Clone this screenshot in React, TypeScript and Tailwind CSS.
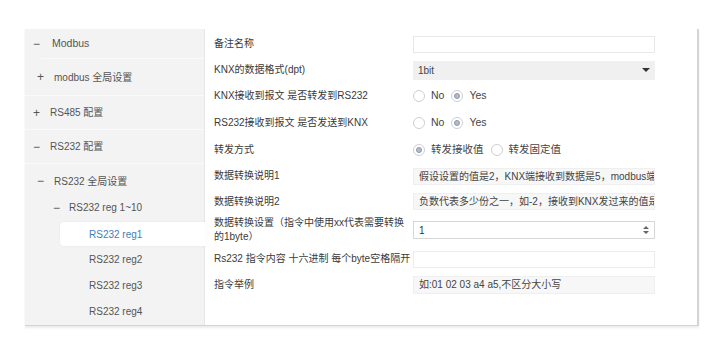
import React from 'react';

const font = { fontFamily: '"Liberation Sans", "Noto Sans CJK SC", sans-serif' };

const Radio: React.FC<{ on?: boolean; label: string }> = ({ on, label }) => (
  <div className="flex items-center gap-[6px] mr-[7px]">
    <span className="w-[12px] h-[12px] rounded-full border border-[#cfcfcf] bg-white flex items-center justify-center">
      {on && <span className="w-[6px] h-[6px] rounded-full bg-[#b4bacb] border border-[#8d97ad]" />}
    </span>
    <span className="text-[#444] text-[10.5px]">{label}</span>
  </div>
);

const Row: React.FC<{ h: string; label: React.ReactNode; children?: React.ReactNode }> = ({ h, label, children }) => (
  <div className={`flex items-center ${h}`}>
    <div className="w-[199px] shrink-0 leading-[14px] text-[#3a3a3a] whitespace-nowrap">{label}</div>
    <div className="w-[242px] flex items-center">{children}</div>
  </div>
);

const SideRow: React.FC<{ h: string; pl: string; sign?: string; text: string }> = ({ h, pl, sign, text }) => (
  <div className={`flex items-center ${h} ${pl}`}>
    {sign && <span className="w-[17px] text-[#555] text-[12px]">{sign}</span>}
    <span className="text-[#555]">{text}</span>
  </div>
);

export default function App() {
  return (
    <div className="w-[712px] h-[345px] bg-white text-[10px] pt-[29px] pl-[25px]" style={font}>
      <div className="flex w-[674px] h-[297px] border-r-2 border-b border-[#d4d4d4] shadow-[0_2px_2px_rgba(0,0,0,0.08)]">
        {/* Sidebar */}
        <div className="w-[180px] bg-[#f3f3f3] border-r border-[#e6e6e6] flex flex-col relative">
          <div className="h-[29px] flex items-center pl-[8px]">
            <span className="w-[19px] text-[#555] text-[12px]">−</span>
            <span className="text-[#555] text-[10.5px]">Modbus</span>
          </div>
          <div className="ml-[16px] border-t border-[#fafafa]" />
          <SideRow h="h-[36px]" pl="pl-[12px]" sign="+" text="modbus 全局设置" />
          <div className="border-t border-[#fafafa]" />
          <SideRow h="h-[33px]" pl="pl-[8px]" sign="+" text="RS485 配置" />
          <div className="border-t border-[#fafafa]" />
          <SideRow h="h-[33px]" pl="pl-[8px]" sign="−" text="RS232 配置" />
          <div className="border-t border-[#fafafa]" />
          <SideRow h="h-[34px]" pl="pl-[12px]" sign="−" text="RS232 全局设置" />
          <div className="h-[24px] flex items-start pt-[3px] pl-[28px]">
            <span className="w-[16px] text-[#555] text-[12px] leading-[14px]">−</span>
            <span className="text-[#555] leading-[14px]">RS232 reg 1~10</span>
          </div>
          <div className="h-[24px] ml-[35px] -mr-[2px] bg-white rounded-l-[4px] shadow-[0_0_2px_rgba(0,0,0,0.08)] flex items-center pl-[29px] relative z-10">
            <span className="text-[#3f7cb8]">RS232 reg1</span>
          </div>
          <div className="h-[26px] flex items-center pl-[64px] text-[#555]">RS232 reg2</div>
          <div className="h-[26px] flex items-center pl-[64px] text-[#555]">RS232 reg3</div>
          <div className="h-[26px] flex items-center pl-[64px] text-[#555]">RS232 reg4</div>
        </div>

        {/* Form */}
        <div className="flex-1 pl-[9px] pt-[2px] flex flex-col">
          <Row h="h-[26px]" label="备注名称">
            <div className="w-full h-[17px] border border-[#e8e8e8] bg-white" />
          </Row>
          <Row h="h-[26px]" label="KNX的数据格式(dpt)">
            <div className="w-full h-[19px] bg-[#f0f0f0] flex items-center justify-between px-[5px] text-[#444]">
              <span>1bit</span>
              <svg width="8" height="5" viewBox="0 0 8 5"><path d="M0 0 L8 0 L4 4 Z" fill="#333" /></svg>
            </div>
          </Row>
          <Row h="h-[26px]" label="KNX接收到报文 是否转发到RS232">
            <Radio label="No" />
            <Radio on label="Yes" />
          </Row>
          <Row h="h-[27px]" label="RS232接收到报文 是否发送到KNX">
            <Radio label="No" />
            <Radio on label="Yes" />
          </Row>
          <Row h="h-[27px]" label="转发方式">
            <Radio on label="转发接收值" />
            <Radio label="转发固定值" />
          </Row>
          <Row h="h-[26px]" label="数据转换说明1">
            <div className="w-full h-[17px] bg-[#f7f7f7] border border-[#efefef] px-[5px] flex items-center overflow-hidden whitespace-nowrap text-[#444]">
              假设设置的值是2，KNX端接收到数据是5，modbus端
            </div>
          </Row>
          <Row h="h-[25px]" label="数据转换说明2">
            <div className="w-full h-[17px] bg-[#f7f7f7] border border-[#efefef] px-[5px] flex items-center overflow-hidden whitespace-nowrap text-[#444]">
              负数代表多少份之一，如-2，接收到KNX发过来的值是
            </div>
          </Row>
          <Row h="h-[32px]" label={<>数据转换设置（指令中使用xx代表需要转换<br />的1byte）</>}>
            <div className="w-full h-[18px] bg-white border border-[#d6d6d6] px-[5px] flex items-center justify-between text-[#333]">
              <span>1</span>
              <svg width="6" height="10" viewBox="0 0 6 10"><path d="M0 4 L6 4 L3 1 Z M0 6 L6 6 L3 9 Z" fill="#666" /></svg>
            </div>
          </Row>
          <Row h="h-[26px]" label="Rs232 指令内容 十六进制 每个byte空格隔开">
            <div className="w-full h-[17px] bg-white border border-[#ececec]" />
          </Row>
          <Row h="h-[25px]" label="指令举例">
            <div className="w-full h-[18px] bg-[#f7f7f7] border border-[#efefef] px-[5px] flex items-center text-[#444]">
              如:01 02 03 a4 a5,不区分大小写
            </div>
          </Row>
        </div>
      </div>
    </div>
  );
}
